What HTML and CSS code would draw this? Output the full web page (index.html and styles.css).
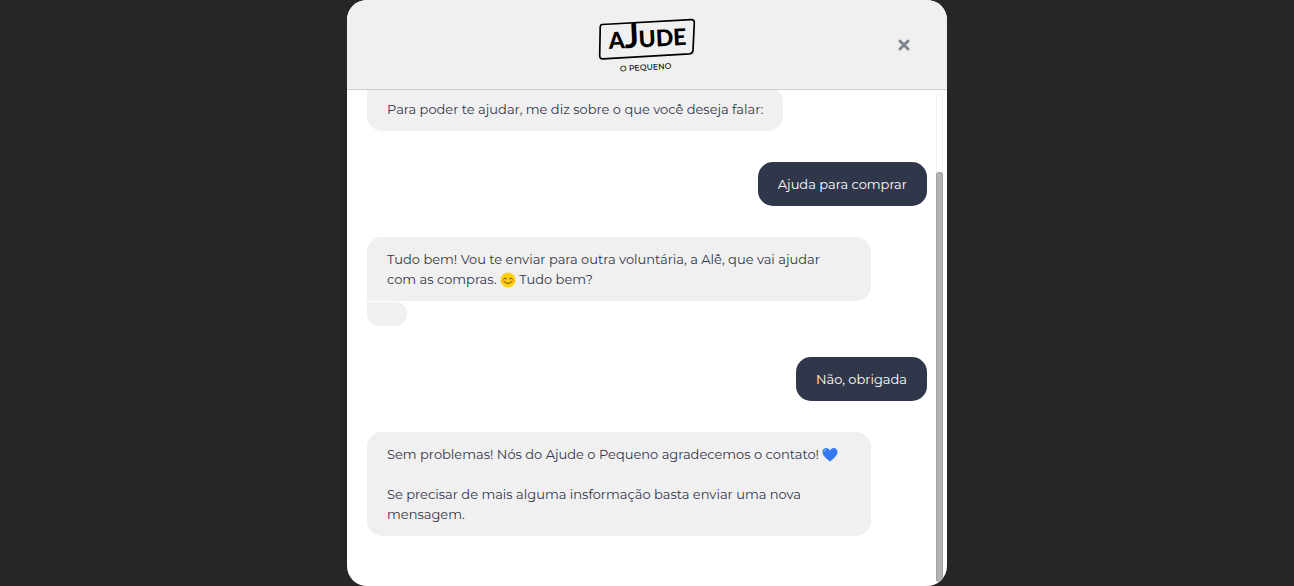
FILE: index.html
```html
<!DOCTYPE html>
<html lang="pt-BR">
<head>
<meta charset="utf-8">
<title>Ajude o Pequeno</title>
<link rel="stylesheet" href="styles.css">
</head>
<body>
<main class="chat">
  <header class="chat-header">
    <svg class="logo" viewBox="0 0 100 60" role="img" aria-label="Ajude o Pequeno">
      <path d="M5 9.500 L94 4.600 Q97.500 4.500 97.300 8 L96 35.500 Q95.800 38.500 92.500 38.800 L6 43.800 Q2.500 44 2.700 40.500 L3.200 12.500 Q3.300 9.600 5 9.500Z" fill="none" stroke="#000" stroke-width="1.700"/>
      <g transform="rotate(-3 50 32)" class="logo-word">
        <text x="12" y="32" font-size="23">A</text>
        <text x="28" y="32" font-size="34" class="logo-j">J</text>
        <text x="42" y="32" font-size="23">UDE</text>
      </g>
      <text x="23" y="55" transform="rotate(-3 50 55)" class="logo-sub">O PEQUENO</text>
    </svg>
    <button class="close" type="button" aria-label="Fechar">
      <svg viewBox="0 0 12 12" width="12" height="12"><path d="M2 2L10 10M10 2L2 10" stroke="#7f868c" stroke-width="3" stroke-linecap="round"/></svg>
    </button>
  </header>
  <div class="chat-body">
    <div class="messages">
      <div class="group bot">
        <p class="bubble continued">Para poder te ajudar, me diz sobre o que você deseja falar:</p>
      </div>
      <div class="group user">
        <p class="bubble">Ajuda para comprar</p>
      </div>
      <div class="group bot">
        <p class="bubble leading">Tudo bem! Vou te enviar para outra voluntária, a Alê, que vai ajudar com as compras. <svg class="emoji" viewBox="0 0 16 16" role="img" aria-label="sorriso"><circle cx="8" cy="8" r="7.500" fill="#fdd20c"/><ellipse cx="3.500" cy="9" rx="2" ry="1.500" fill="#ff9d2e" opacity=".6"/><ellipse cx="12.500" cy="9" rx="2" ry="1.500" fill="#ff9d2e" opacity=".6"/><path d="M3.500 7Q5 4.500 6.500 7M9.500 7Q11 4.500 12.500 7M4.500 10Q8 13 11.500 10" fill="none" stroke="#6a4a16" stroke-width="1" stroke-linecap="round"/></svg> Tudo bem?</p>
        <p class="bubble continued"></p>
      </div>
      <div class="group user">
        <p class="bubble">Não, obrigada</p>
      </div>
      <div class="group bot">
        <p class="bubble">Sem problemas! Nós do Ajude o Pequeno agradecemos o contato! <svg class="emoji" viewBox="0 0 16 16" role="img" aria-label="coração azul"><path d="M8 14.500C5 12 .5 9 .5 5C.5 .3 6.500 -.3 8 3.700C9.500 -.3 15.500 .3 15.500 5C15.500 9 11 12 8 14.500Z" fill="#3478f6"/><path d="M2.300 4.500Q2.500 2.500 4.300 2.300" fill="none" stroke="#69a7ff" stroke-width="1.200" stroke-linecap="round"/></svg><br><br>Se precisar de mais alguma insformação basta enviar uma nova mensagem.</p>
      </div>
    </div>
    <div class="scrollbar"><div class="thumb"></div></div>
  </div>
</main>
</body>
</html>
```
FILE: styles.css
```css
* {
  box-sizing: border-box;
}

body {
  margin: 0;
  background: #262626;
  color: #31374a;
  font: 13px/20px Montserrat, Inter, sans-serif;
}

.chat {
  display: flex;
  flex-direction: column;
  width: 100%;
  max-width: 600px;
  height: 100vh;
  margin: 0 auto;
  overflow: hidden;
  border-radius: 20px;
  background: #fff;
}

.chat-header {
  display: grid;
  grid-template-columns: 1fr auto 1fr;
  align-items: center;
  flex: none;
  padding: 15px 30px 14px;
  border-bottom: 1px solid #cdcfde;
  background: #f0f0f0;
}

.logo {
  grid-column: 2;
  width: 100px;
  height: 60px;
  overflow: visible;
  fill: #000;
}

.logo-word {
  font-family: Lato, sans-serif;
  font-weight: 900;
}

.logo-j {
  font-weight: 700;
}

.logo-sub {
  font: 500 8px Montserrat, Inter, sans-serif;
}

.close {
  display: flex;
  justify-self: end;
  padding: 7px;
  border: 0;
  background: none;
  cursor: pointer;
}

.chat-body {
  display: flex;
  flex: 1;
  min-height: 0;
}

.messages {
  display: flex;
  flex: 1;
  flex-direction: column;
  justify-content: flex-end;
  gap: 31px;
  min-width: 0;
  padding: 0 9px 50px 20px;
  overflow: hidden;
}

.group {
  display: flex;
  flex: none;
  flex-direction: column;
  align-items: flex-start;
  gap: 1px;
}

.bubble {
  max-width: 90%;
  margin: 0;
  padding: 12px 20px;
  border-radius: 15px;
  background: #f0f0f0;
}

.leading {
  border-bottom-left-radius: 0;
}

.continued {
  border-top-left-radius: 0;
}

.user {
  align-items: flex-end;
}

.user .bubble {
  background: #31374a;
  color: #fff;
}

.emoji {
  width: 16px;
  height: 16px;
  vertical-align: -4px;
}

.scrollbar {
  display: flex;
  flex: none;
  flex-direction: column;
  justify-content: flex-end;
  width: 7px;
  margin: 4px 4px 4px 0;
  border-radius: 3px;
  box-shadow: inset 0 0 0 1px #f2f2f2;
}

.thumb {
  height: 84%;
  border: solid #a0a0a0;
  border-width: 1px 1px 0;
  border-radius: 3px;
  background: #b2b2b2;
}
```
